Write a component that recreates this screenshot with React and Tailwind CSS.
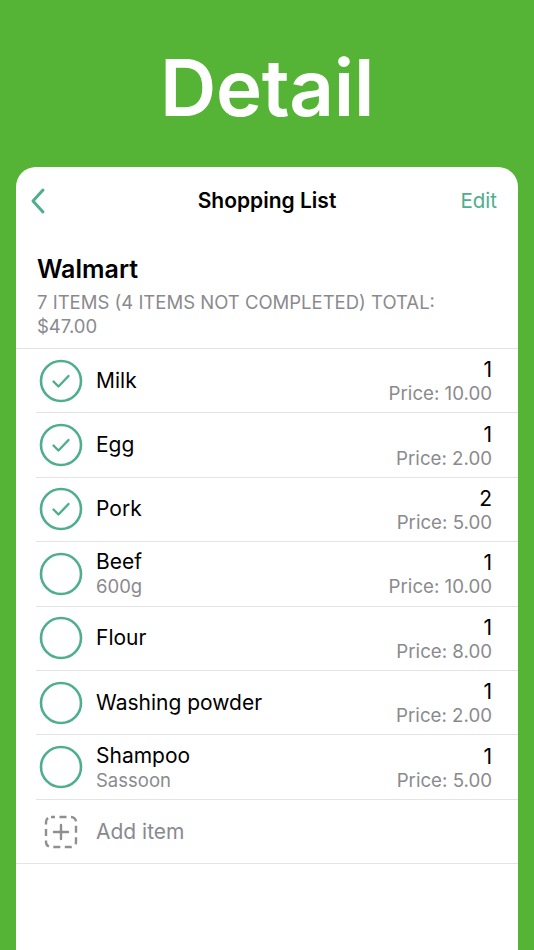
import React from "react";

const items = [
  { name: "Milk", qty: 1, price: "10.00", done: true },
  { name: "Egg", qty: 1, price: "2.00", done: true },
  { name: "Pork", qty: 2, price: "5.00", done: true },
  { name: "Beef", sub: "600g", qty: 1, price: "10.00", done: false },
  { name: "Flour", qty: 1, price: "8.00", done: false },
  { name: "Washing powder", qty: 1, price: "2.00", done: false },
  { name: "Shampoo", sub: "Sassoon", qty: 1, price: "5.00", done: false },
];

function Check({ done }) {
  return (
    <svg width="44" height="44" viewBox="0 0 44 44" className="shrink-0">
      <circle cx="22" cy="22" r="20" fill="none" stroke="#4fae8c" strokeWidth="2.6" />
      {done && (
        <path d="M14.5 22.5 L19.5 27.5 L29.5 17" fill="none" stroke="#4fae8c" strokeWidth="2.4" strokeLinecap="round" strokeLinejoin="round" />
      )}
    </svg>
  );
}

function AddIcon() {
  return (
    <svg width="34" height="34" viewBox="0 0 34 34" className="shrink-0">
      <rect x="2" y="2" width="30" height="30" rx="5" fill="none" stroke="#8e8e93" strokeWidth="2.4" strokeDasharray="7 4.5" strokeDashoffset="3" />
      <path d="M17 10 V24 M10 17 H24" stroke="#8e8e93" strokeWidth="2.4" strokeLinecap="round" />
    </svg>
  );
}

export default function App() {
  return (
    <div className="w-[534px] h-[950px] bg-[#55b436] flex flex-col overflow-hidden" style={{ fontFamily: "Inter, 'Noto Sans', sans-serif" }}>
      <div className="h-[167px] flex items-center justify-center">
        <div className="text-white font-semibold text-[78px] leading-none tracking-[-0.3px] pt-[8px]">Detail</div>
      </div>
      <div className="mx-[16px] flex-1 bg-white rounded-t-[20px] flex flex-col">
        <div className="h-[68px] flex items-center justify-between px-[10px] relative">
          <svg width="24" height="28" viewBox="0 0 24 28" className="ml-[2px]">
            <path d="M15 3 L5 14 L15 25" fill="none" stroke="#4fae8c" strokeWidth="3" strokeLinecap="round" strokeLinejoin="round" />
          </svg>
          <div className="absolute left-0 right-0 text-center text-[21px] font-semibold text-black pointer-events-none">Shopping List</div>
          <div className="text-[20.5px] text-[#4fae8c] mr-[11px]">Edit</div>
        </div>
        <div className="px-[21px] pt-[19px] pb-[10px]">
          <div className="text-[25px] font-semibold text-black leading-[30px]">Walmart</div>
          <div className="text-[18.5px] text-[#8a8a8e] leading-[24px] mt-[6px] pr-[20px]">7 ITEMS (4 ITEMS NOT COMPLETED) TOTAL: $47.00</div>
        </div>
        <div className="border-t border-[#e3e3e6]" />
        <div className="pl-[20px]">
          {items.map((it) => (
            <div key={it.name} className="h-[64.4px] flex items-center border-b border-[#e3e3e6] pr-[26px]">
              <div className="ml-[3px] mr-[13px]"><Check done={it.done} /></div>
              <div className="flex-1 flex flex-col justify-center">
                <div className="text-[21px] text-black leading-[26px]">{it.name}</div>
                {it.sub && <div className="text-[18.5px] text-[#8a8a8e] leading-[23px]">{it.sub}</div>}
              </div>
              <div className="flex flex-col items-end pt-[2px]">
                <div className="text-[21px] text-black leading-[25px]">{it.qty}</div>
                <div className="text-[18.7px] text-[#8a8a8e] leading-[24px]">Price: {it.price}</div>
              </div>
            </div>
          ))}
        </div>
        <div className="h-[64px] flex items-center border-b border-[#e3e3e6] pl-[28px] pt-[2px]">
          <AddIcon />
          <div className="ml-[18px] text-[21px] text-[#8a8a8e]">Add item</div>
        </div>
      </div>
    </div>
  );
}
